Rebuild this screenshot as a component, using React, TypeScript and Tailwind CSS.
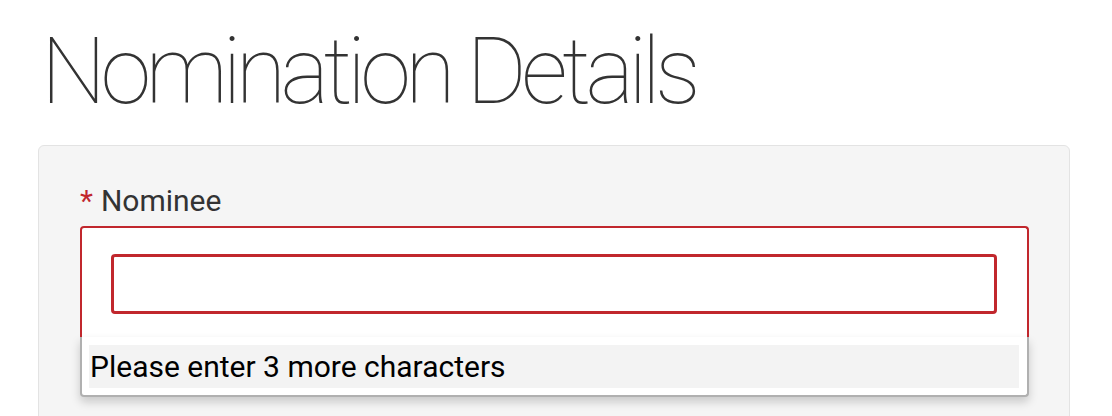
import React from "react";

export default function App() {
  return (
    <div className="min-h-[416px] w-[1112px] overflow-hidden bg-white pl-[38px] pr-[42px]" style={{ fontFamily: "Roboto, 'Liberation Sans', sans-serif" }}>
      <h1 className="pl-[3px] pt-[26px] text-[92px] font-thin leading-none tracking-[-5.6px] text-[#333333] h-[118px] mb-[27px] whitespace-nowrap">
        Nomination Details
      </h1>
      <div className="rounded-[6px] border border-[#e3e3e3] bg-[#f5f5f5] pl-[41px] pr-[40px] pt-[40px] pb-[40px]">
        <label className="flex h-[29px] items-center text-[30px] leading-none text-[#333333]">
          <span className="mr-[8px] text-[#c1272d]">*</span>
          <span>Nominee</span>
        </label>
        <div className="mt-[11px]">
          <div className="rounded-t-[4px] border-2 border-b-0 border-[#c1272d] bg-white pl-[29px] pr-[30px] pt-[26px] pb-[23px]">
            <input
              type="text"
              className="block h-[60px] w-full rounded-[4px] border-[3px] border-[#c1272d] bg-white outline-none"
            />
          </div>
          <div className="rounded-b-[4px] border-2 border-t-0 border-[#b0b0b0] bg-white pl-[7px] pr-[8px] pt-[8px] pb-[7px] shadow-[0_5px_10px_rgba(0,0,0,0.18)]">
            <div className="h-[43px] bg-[#f3f3f3] pl-[1px] text-[30px] leading-[43px] text-black whitespace-nowrap">
              Please enter 3 more characters
            </div>
          </div>
        </div>
        <div className="h-[40px]" />
      </div>
    </div>
  );
}
